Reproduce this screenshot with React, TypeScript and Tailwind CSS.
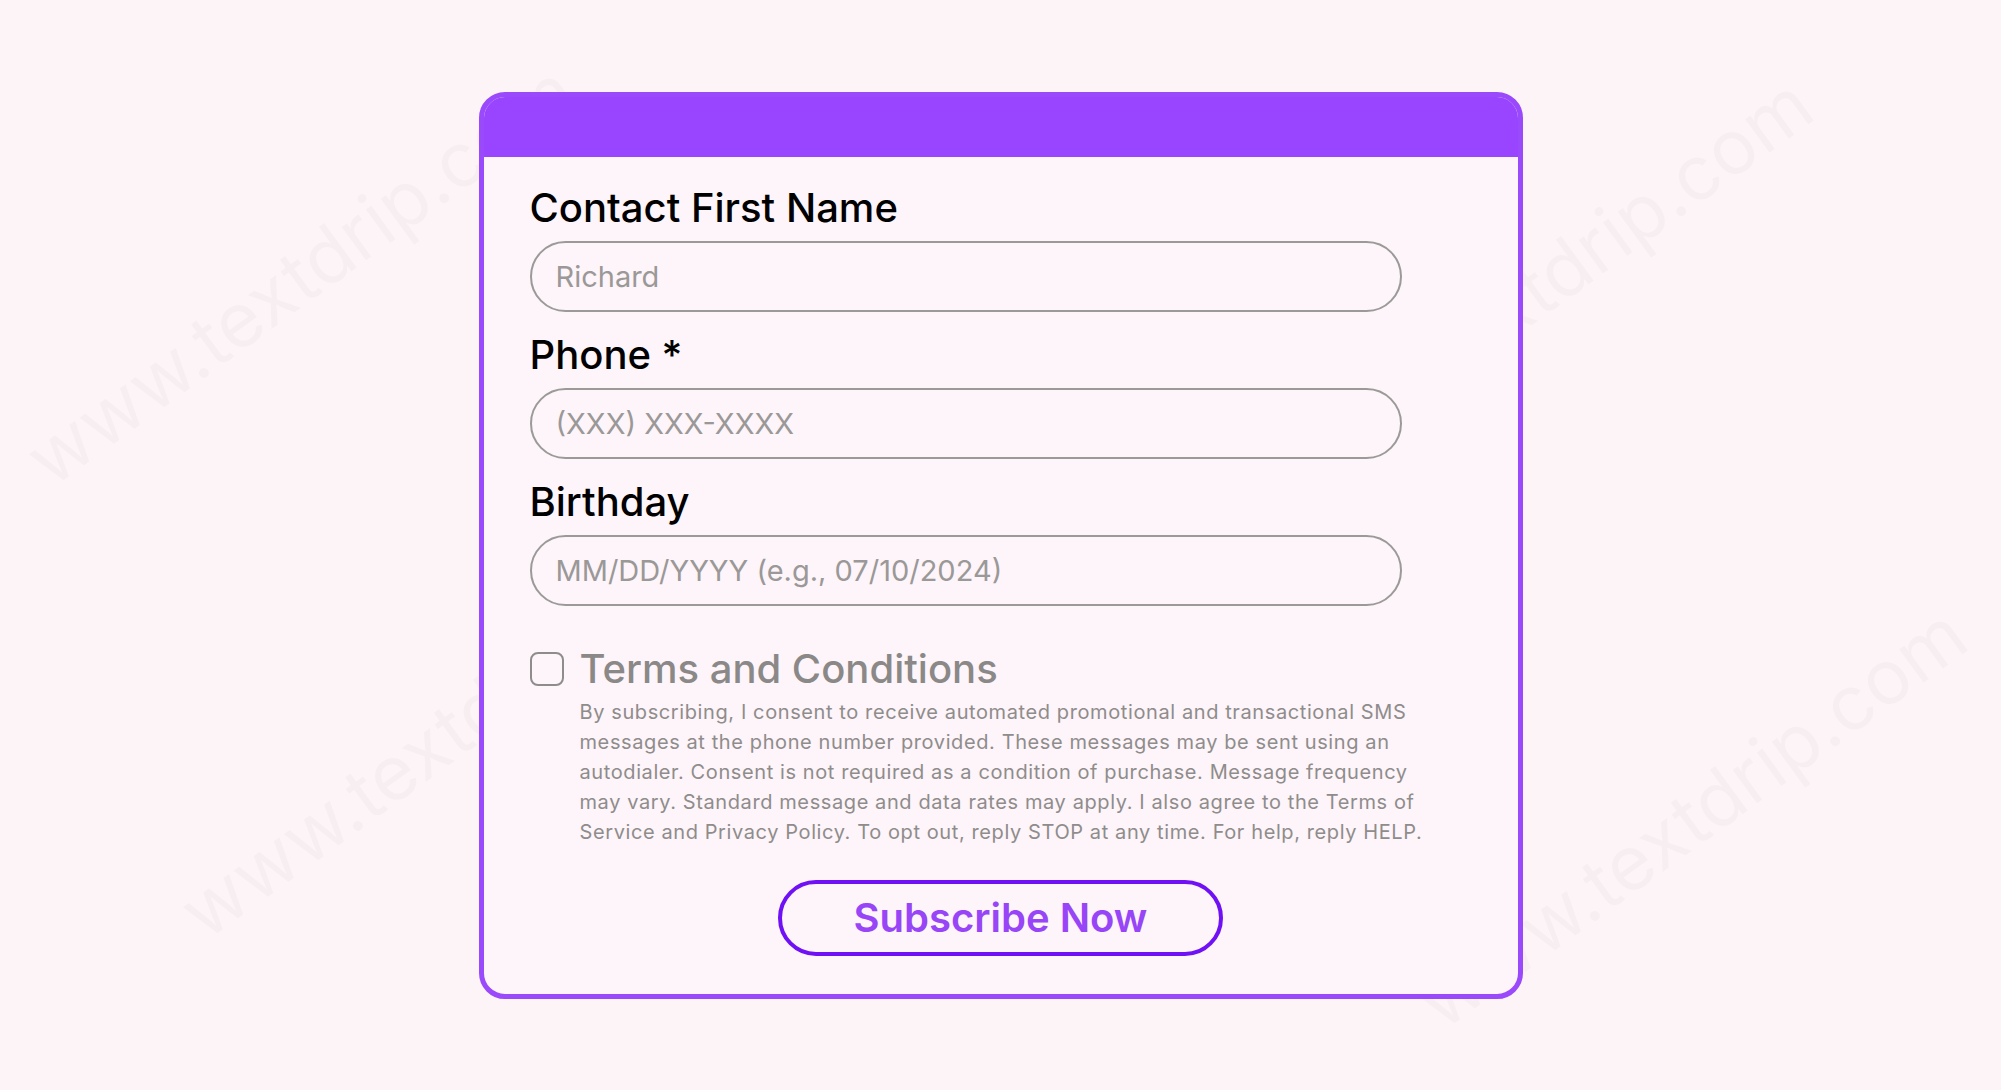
import type { ReactNode } from 'react';

const font = { fontFamily: '"Inter", "Open Sans", sans-serif' };

// faint diagonal watermark, positioned by its centre
const watermarks = [
  'left-[300px] top-[274px]',
  'left-[1537px] top-[287px]',
  'left-[454px] top-[727px]',
  'left-[1691px] top-[817px]',
];

function Field({ label, placeholder }: { label: ReactNode; placeholder: string }) {
  return (
    <div className="flex flex-col">
      <label className="text-[40px] font-medium leading-[48px] text-black">{label}</label>
      <input
        type="text"
        placeholder={placeholder}
        className="mt-[9px] h-[71px] w-[872px] rounded-full border-2 border-[#9c9999] bg-transparent px-[24px] text-[29px] text-[#8f8c8c] outline-none placeholder:text-[#9b9898]"
      />
    </div>
  );
}

export default function App() {
  return (
    <div
      className="relative flex min-h-[1090px] w-full items-center justify-center overflow-hidden bg-[#fdf4f8]"
      style={font}
    >
      {watermarks.map((pos) => (
        <span
          key={pos}
          className={`pointer-events-none absolute ${pos} -translate-x-1/2 -translate-y-1/2 -rotate-[36deg] select-none whitespace-nowrap text-[76px] font-normal text-black/[0.022]`}
        >
          www.textdrip.com
        </span>
      ))}

      <div className="relative z-10 flex w-[1044px] flex-col overflow-hidden rounded-[26px] border-[5px] border-[#9a49fb] bg-[#fdf5f9]">
        <div className="h-[60px] bg-[#9945ff]" />

        <div className="flex flex-col pl-[46px] pt-[27px] pb-[38px]">
          <div className="flex flex-col gap-[19px]">
            <Field label="Contact First Name" placeholder="Richard" />
            <Field label="Phone *" placeholder="(XXX) XXX-XXXX" />
            <Field label="Birthday" placeholder="MM/DD/YYYY (e.g., 07/10/2024)" />
          </div>

          <div className="mt-[39px] flex items-center gap-[16px]">
            <span className="h-[34px] w-[34px] shrink-0 rounded-[8px] border-2 border-[#8f8c8c]" />
            <span className="text-[40px] font-medium leading-[48px] text-[#8b8888]">Terms and Conditions</span>
          </div>

          <p className="ml-[50px] mt-[4px] text-[20px] leading-[30px] tracking-[0.03em] text-[#8f8c8c]">
            By subscribing, I consent to receive automated promotional and transactional SMS
            <br />
            messages at the phone number provided. These messages may be sent using an
            <br />
            autodialer. Consent is not required as a condition of purchase. Message frequency
            <br />
            may vary. Standard message and data rates may apply. I also agree to the Terms of
            <br />
            Service and Privacy Policy. To opt out, reply STOP at any time. For help, reply HELP.
          </p>

          <div className="mt-[33px] flex justify-center pr-[46px]">
            <button className="h-[76px] w-[445px] rounded-full border-[4px] border-[#7010f5] text-[40px] font-semibold text-[#9845f8]">
              Subscribe Now
            </button>
          </div>
        </div>
      </div>
    </div>
  );
}
